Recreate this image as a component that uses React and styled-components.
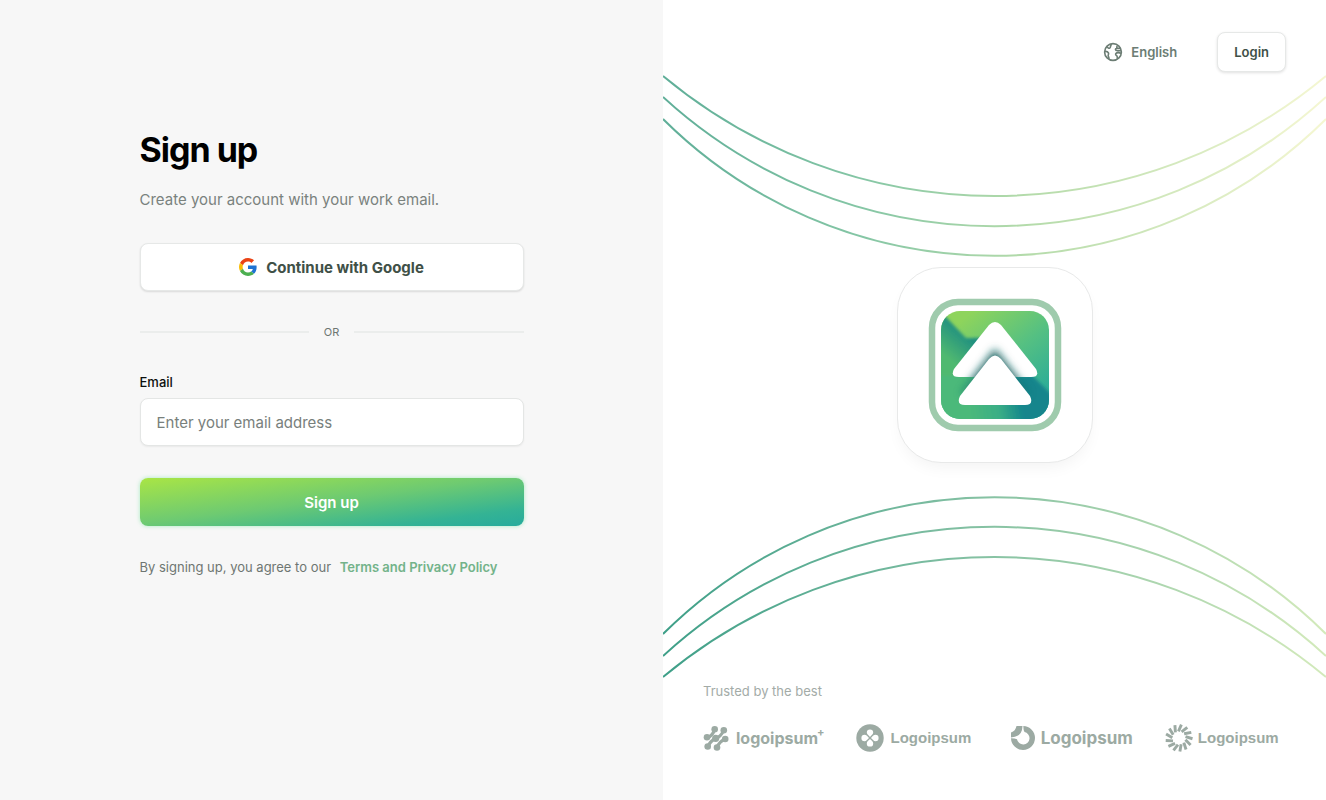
import styled, { createGlobalStyle } from 'styled-components'

const GlobalStyle = createGlobalStyle`
    *{
        box-sizing: border-box;
    }
    body{
        margin: 0;
        font-family: Inter, sans-serif;
    }
`

const Page = styled.div`
    display: grid;
    grid-template-columns: 1fr 1fr;
    min-height: 100vh;
    background: #fff;
`

const FormSide = styled.main`
    display: flex;
    justify-content: center;
    padding: 128px 24px 40px;
    background: #f7f7f7;
`

const Form = styled.form`
    display: flex;
    flex-direction: column;
    inline-size: 100%;
    max-inline-size: 384px;
`

const Title = styled.h1`
    margin: 0;
    font-size: 34px;
    line-height: 44px;
    font-weight: 700;
    letter-spacing: -1px;
    color: #000;
`

const Subtitle = styled.p`
    margin: 16px 0 31px;
    font-size: 15px;
    line-height: 24px;
    color: #7a827e;
`

const GoogleButton = styled.button`
    display: flex;
    align-items: center;
    justify-content: center;
    gap: 9px;
    block-size: 48px;
    border: 1px solid #e6e8e7;
    border-radius: 8px;
    background: #fff;
    box-shadow: 0 1px 2px rgba(0, 0, 0, 0.12);
    font: 700 15px Inter, sans-serif;
    color: #405047;
`

const Divider = styled.div`
    display: flex;
    align-items: center;
    gap: 15px;
    margin-block: 33px 32px;
    font-size: 11px;
    line-height: 16px;
    color: #6e7672;
    &::before, &::after{
        content: '';
        flex: 1;
        block-size: 2px;
        background: #ebedec;
    }
`

const Label = styled.label`
    font-size: 13px;
    line-height: 20px;
    font-weight: 500;
    color: #0c0f0d;
`

const Input = styled.input`
    block-size: 48px;
    margin-block: 6px 32px;
    padding-inline: 16px;
    border: 1px solid #e4e6e5;
    border-radius: 8px;
    background: #fff;
    box-shadow: 0 1px 2px rgba(0, 0, 0, 0.06);
    font: 400 15px Inter, sans-serif;
    &::placeholder{
        color: #78807c;
        opacity: 1;
    }
`

const SubmitButton = styled.button`
    block-size: 48px;
    border: 0;
    border-radius: 8px;
    background: linear-gradient(to bottom right, #a9e545, #6dca72 48%, #34b394 82%, #27ab9d);
    box-shadow: 0 0 4px rgba(74, 222, 128, 0.45);
    font: 600 15px Inter, sans-serif;
    color: #fff;
`

const Terms = styled.p`
    margin: 31px 0 0;
    font-size: 13px;
    line-height: 20px;
    color: #6e7672;
    a{
        margin-inline-start: 5px;
        font-weight: 600;
        color: #73b38a;
        text-decoration: none;
    }
`

const BrandSide = styled.aside`
    position: relative;
    display: flex;
    flex-direction: column;
    padding: 32px 40px 46px;
`

const Curves = styled.svg`
    position: absolute;
    inset: 0;
    inline-size: 100%;
    block-size: 100%;
    pointer-events: none;
`

const Header = styled.header`
    display: flex;
    justify-content: flex-end;
    align-items: center;
    gap: 40px;
`

const LanguageButton = styled.button`
    display: flex;
    align-items: center;
    gap: 8px;
    padding: 0;
    border: 0;
    background: none;
    font: 600 13px Inter, sans-serif;
    color: #6c7d74;
`

const LoginButton = styled.button`
    block-size: 40px;
    padding-inline: 16px;
    border: 1px solid #e6e8e7;
    border-radius: 8px;
    background: #fff;
    box-shadow: 0 1px 3px rgba(0, 0, 0, 0.12);
    font: 600 13px Inter, sans-serif;
    color: #405047;
`

const Stage = styled.div`
    flex: 1;
    display: grid;
    place-items: center;
    padding-block-end: 24px;
`

const Tile = styled.div`
    position: relative;
    display: grid;
    place-items: center;
    inline-size: 196px;
    block-size: 196px;
    border: 1px solid #e8e9e9;
    border-radius: 44px;
    background: #fff;
    box-shadow: 0 8px 16px -4px rgba(0, 0, 0, 0.05);
`

const Trusted = styled.p`
    margin: 0 0 21px;
    font-size: 13px;
    line-height: 20px;
    color: #a3aba7;
`

const Partners = styled.ul`
    display: grid;
    grid-template-columns: repeat(4, 1fr);
    gap: 32px;
    margin: 0;
    padding: 0;
    list-style: none;
`

const Partner = styled.li`
    display: flex;
    align-items: center;
    gap: ${({ $gap }) => $gap}px;
    block-size: 32px;
    white-space: nowrap;
    font-family: ${({ $font }) => $font}, sans-serif;
    font-size: ${({ $size }) => $size}px;
    line-height: 20px;
    font-weight: 700;
    color: #9caaa3;
    svg{
        flex: none;
    }
    sup{
        align-self: flex-start;
        font-size: 11px;
        margin-inline-start: -8px;
    }
`

function GoogleIcon() {
    return (
        <svg width="18" height="18" viewBox="0 0 48 48" aria-hidden="true">
            <path fill="#ea4315" d="M24 9.5c3.5 0 6.700 1.200 9.200 3.600l6.900-6.900C35.900 2.400 30.500 0 24 0 14.600 0 6.500 5.400 2.600 13.200l8 6.200C12.400 13.700 17.700 9.500 24 9.500z" />
            <path fill="#1f72d2" d="M47 24.500c0-1.600-.2-3.100-.4-4.500H24v9h12.900c-.6 3-2.200 5.500-4.700 7.200l7.700 6C44.400 38 47 31.800 47 24.500z" />
            <path fill="#f9bc05" d="M10.500 28.600c-.5-1.500-.8-3-.8-4.600s.3-3.100.8-4.600l-8-6.200C.9 16.500 0 20.100 0 24s.9 7.500 2.600 10.800l7.900-6.200z" />
            <path fill="#4caf50" d="M24 48c6.500 0 11.900-2.100 15.900-5.800l-7.700-6c-2.200 1.500-4.900 2.300-8.200 2.300-6.300 0-11.600-4.200-13.500-9.900l-8 6.200C6.500 42.600 14.600 48 24 48z" />
        </svg>
    )
}

function GlobeIcon() {
    return (
        <svg width="20" height="20" viewBox="0 0 20 20" fill="none" stroke="currentColor" strokeWidth="1.600" strokeLinejoin="round" aria-hidden="true">
            <circle cx="10" cy="10" r="8.400" />
            <path d="M1.800 9.500C3 9.300 4.800 9.800 5.500 11c.5 1-.5 1.600-.3 2.800.1.900.9 1.200.7 3M4 4.500c.7 1.700 1.900 2.100 2.900 1.300C7.800 5 7.300 3.800 8.500 2M17.500 6.200h-3.200c-1.200 0-1.900.5-1.800 1.400.1.800.9 1 2 1h3.700M14 3.800l-.2 2.200M18.300 11.200c-1.900-.6-4.700-.6-5.400.3-.6.900-.1 1.800.8 2.200.8.400.3 1.600.8 3" />
        </svg>
    )
}

function BrandLogo() {
    return (
        <svg width="134" height="134" viewBox="0 0 134 134" role="img" aria-label="Logo">
            <defs>
                <linearGradient id="tile" x1="0.3" y1="0" x2="0.9" y2="0.75">
                    <stop offset="0" stopColor="#8ed45c" />
                    <stop offset="0.55" stopColor="#55c082" />
                    <stop offset="1" stopColor="#2fae96" />
                </linearGradient>
                <linearGradient id="beam" gradientUnits="userSpaceOnUse" x1="48" y1="36" x2="24" y2="64">
                    <stop offset="0" stopColor="#178783" />
                    <stop offset="1" stopColor="#50b970" />
                </linearGradient>
                <linearGradient id="base" gradientUnits="userSpaceOnUse" x1="40" y1="110" x2="94" y2="102">
                    <stop offset="0" stopColor="#4cb97a" />
                    <stop offset="0.55" stopColor="#3aae86" />
                    <stop offset="1" stopColor="#12858c" />
                </linearGradient>
                <clipPath id="tileClip"><rect x="13" y="13" width="108" height="108" rx="19" /></clipPath>
                <clipPath id="roofClip"><path d="M61 27Q67 21 73 27L108 71Q112 79 103 79H31Q22 79 26 71Z" /></clipPath>
                <filter id="soft" x="-30%" y="-30%" width="160%" height="160%"><feGaussianBlur stdDeviation="4" /></filter>
                <filter id="haze"><feGaussianBlur stdDeviation="1.500" /></filter>
            </defs>
            <rect x="4" y="4" width="126" height="126" rx="26" fill="#fff" stroke="#9fcbad" strokeWidth="6.500" />
            <g clipPath="url(#tileClip)">
                <rect x="13" y="13" width="108" height="108" fill="url(#tile)" />
                <path d="M0 0L38 40H60V90H0Z" fill="url(#beam)" filter="url(#haze)" />
                <path d="M0 78H90L104 77L134 107V134H0Z" fill="url(#base)" filter="url(#haze)" />
                <path d="M67 54L32 96H102Z" fill="#12706f" opacity="0.7" filter="url(#soft)" />
            </g>
            <path d="M61 27Q67 21 73 27L108 71Q112 79 103 79H31Q22 79 26 71Z" fill="#fff" />
            <g clipPath="url(#roofClip)">
                <path d="M67 54L36 94H98Z" fill="#12605f" stroke="#12605f" strokeWidth="4" filter="url(#soft)" />
            </g>
            <path d="M61 61Q67 54 73 61L102 98Q106 107 97 107H37Q28 107 32 98Z" fill="#fff" />
        </svg>
    )
}

function DotsLogo() {
    return (
        <svg width="26" height="26" viewBox="0 0 26 26" fill="currentColor" aria-hidden="true">
            <path stroke="currentColor" strokeWidth="3.200" fill="none" d="M4.300 12.700Q9 11.500 11.700 4.700M5 21.700Q7 16 12.700 13.500Q18 11.500 20.300 6M14 22.500Q16.500 16.500 21.700 14.300" />
            <circle cx="11.700" cy="4.200" r="3.300" />
            <circle cx="20.800" cy="5.200" r="3.300" />
            <circle cx="4" cy="12.200" r="3.300" />
            <circle cx="12.700" cy="13.300" r="3.600" />
            <circle cx="22.200" cy="14" r="3.300" />
            <circle cx="4.700" cy="21.500" r="3.300" />
            <circle cx="14" cy="22.500" r="3.300" />
        </svg>
    )
}

function CloverLogo() {
    return (
        <svg width="28" height="28" viewBox="0 0 28 28" aria-hidden="true">
            <circle cx="14" cy="14" r="13.700" fill="currentColor" />
            <g fill="#fff">
                {[0, 90, 180, 270].map(angle => (
                    <path key={angle} transform={`rotate(${angle} 14 14)`} d="M14 13C12 11 10.800 10.300 10.800 8.600a3.200 3.200 0 0 1 6.400 0C17.200 10.300 16 11 14 13z" />
                ))}
            </g>
        </svg>
    )
}

function RingLogo() {
    return (
        <svg width="26" height="26" viewBox="0 0 26 26" fill="currentColor" aria-hidden="true">
            <path d="M13.300 1A12 12 0 1 1 1 13.300Q5 13.500 7 14.200A6.300 6.300 0 1 0 14.500 7Q13.300 5 13.300 1Z" />
            <path d="M6.500 1H12.500Q12.300 12 1 12.500V7.500Q5.500 6 6.500 1Z" />
        </svg>
    )
}

function BurstLogo() {
    return (
        <svg width="28" height="28" viewBox="0 0 28 28" stroke="currentColor" strokeWidth="2.900" aria-hidden="true">
            {Array.from({ length: 13 }, (_, i) => (
                <path key={i} transform={`rotate(${i * 360 / 13 + 8} 14 14)`} d="M12.500 7.500L14.500 0.500" />
            ))}
        </svg>
    )
}

const topArcs = [
    'M0 76A518 518 0 0 0 663 76',
    'M0 97A490 490 0 0 0 663 97',
    'M0 119A470 470 0 0 0 663 119'
]

const bottomArcs = [
    'M0 634A470 470 0 0 1 663 634',
    'M0 656A490 490 0 0 1 663 656',
    'M0 677A518 518 0 0 1 663 677'
]

function App() {
    const onSubmit = (e) => {
        e.preventDefault()
    }

    return (
        <Page>
            <GlobalStyle />
            <FormSide>
                <Form onSubmit={onSubmit}>
                    <Title>Sign up</Title>
                    <Subtitle>Create your account with your work email.</Subtitle>
                    <GoogleButton type="button"><GoogleIcon />Continue with Google</GoogleButton>
                    <Divider>OR</Divider>
                    <Label htmlFor="email">Email</Label>
                    <Input type="email" name="email" id="email" placeholder="Enter your email address" />
                    <SubmitButton type="submit">Sign up</SubmitButton>
                    <Terms>By signing up, you agree to our <a href="#terms">Terms and Privacy Policy</a></Terms>
                </Form>
            </FormSide>
            <BrandSide>
                <Curves viewBox="0 0 663 800" preserveAspectRatio="none" fill="none" strokeWidth="2" aria-hidden="true">
                    <defs>
                        <linearGradient id="topLine" gradientUnits="userSpaceOnUse" x1="0" y1="0" x2="663" y2="0">
                            <stop offset="0" stopColor="#5fae98" />
                            <stop offset="0.3" stopColor="#85c6a5" />
                            <stop offset="0.55" stopColor="#b4dbaa" />
                            <stop offset="1" stopColor="#f5f7d2" />
                        </linearGradient>
                        <linearGradient id="bottomLine" gradientUnits="userSpaceOnUse" x1="0" y1="0" x2="663" y2="0">
                            <stop offset="0" stopColor="#3e9f88" />
                            <stop offset="0.4" stopColor="#79bb9f" />
                            <stop offset="1" stopColor="#d3eabb" />
                        </linearGradient>
                    </defs>
                    {topArcs.map(d => <path key={d} d={d} stroke="url(#topLine)" />)}
                    {bottomArcs.map(d => <path key={d} d={d} stroke="url(#bottomLine)" />)}
                </Curves>
                <Header>
                    <LanguageButton type="button"><GlobeIcon />English</LanguageButton>
                    <LoginButton type="button">Login</LoginButton>
                </Header>
                <Stage>
                    <Tile><BrandLogo /></Tile>
                </Stage>
                <Trusted>Trusted by the best</Trusted>
                <Partners>
                    <Partner $gap={7} $font="Inter" $size={16}><DotsLogo />logoipsum<sup>+</sup></Partner>
                    <Partner $gap={6} $font="'Liberation Sans'" $size={15}><CloverLogo />Logoipsum</Partner>
                    <Partner $gap={5} $font="Inter" $size={17}><RingLogo />Logoipsum</Partner>
                    <Partner $gap={5} $font="'Liberation Sans'" $size={15}><BurstLogo />Logoipsum</Partner>
                </Partners>
            </BrandSide>
        </Page>
    )
}

export default App
